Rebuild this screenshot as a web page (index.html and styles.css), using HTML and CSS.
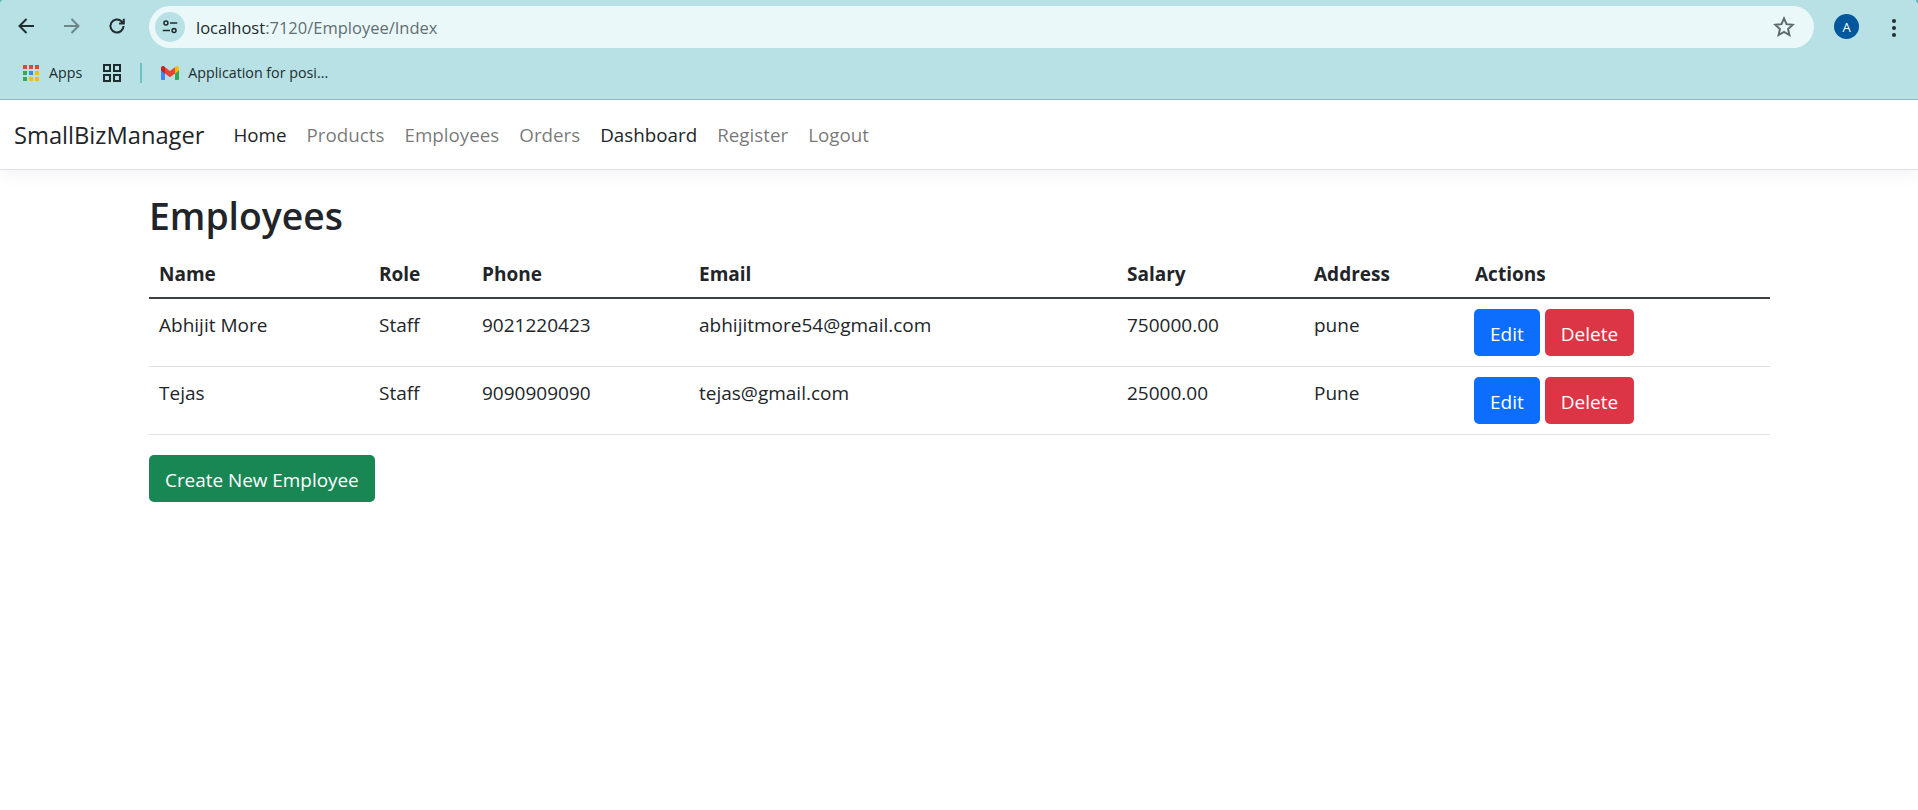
FILE: index.html
```html
<!DOCTYPE html>
<html lang="en">
<head>
  <meta charset="UTF-8">
  <title>Employees - SmallBizManager</title>
  <link rel="stylesheet" href="styles.css">
</head>
<body>
  <div class="browser">
    <div class="toolbar">
      <svg class="tool-icon back" viewBox="0 0 20 20"><path d="M17 10H3.500M9.500 3 2.500 10l7 7" /></svg>
      <svg class="tool-icon forward" viewBox="0 0 20 20"><path d="M3 10h13.500M10.500 3l7 7-7 7" /></svg>
      <svg class="tool-icon reload" viewBox="0 0 20 20"><path d="M16.500 10a6.500 6.500 0 1 1-2-4.700L16.500 7.200M16.800 2.800v4.700h-4.700" /></svg>
      <div class="omnibox">
        <span class="site-info">
          <svg viewBox="0 0 20 20"><circle cx="5.500" cy="5.500" r="2.200" /><path d="M10 5.500h8M2 14h8" /><circle cx="14.500" cy="14" r="2.200" /></svg>
        </span>
        <span class="url">localhost<span class="url-dim">:7120/Employee/Index</span></span>
        <svg class="star" viewBox="0 0 20 20"><path d="M10 2.200l2.300 5.200 5.600.6-4.200 3.800 1.200 5.500L10 14.500l-4.900 2.800 1.200-5.500L2.100 8l5.600-.6z" /></svg>
      </div>
      <span class="avatar">A</span>
      <span class="menu-dots"><i></i><i></i><i></i></span>
    </div>
    <div class="bookmarks">
      <svg class="apps-icon" viewBox="0 0 16 16">
        <rect x="0" y="0" width="4" height="4" fill="#ea4335" /><rect x="6" y="0" width="4" height="4" fill="#ea4335" /><rect x="12" y="0" width="4" height="4" fill="#ea4335" />
        <rect x="0" y="6" width="4" height="4" fill="#34a853" /><rect x="6" y="6" width="4" height="4" fill="#4285f4" /><rect x="12" y="6" width="4" height="4" fill="#fbbc05" />
        <rect x="0" y="12" width="4" height="4" fill="#34a853" /><rect x="6" y="12" width="4" height="4" fill="#fbbc05" /><rect x="12" y="12" width="4" height="4" fill="#fbbc05" />
      </svg>
      <span class="bm-apps">Apps</span>
      <svg class="groups-icon" viewBox="0 0 18 18"><rect x="1" y="1" width="6" height="6" /><rect x="11" y="1" width="6" height="6" /><rect x="1" y="11" width="6" height="6" /><rect x="11" y="11" width="6" height="6" /></svg>
      <span class="bm-sep"></span>
      <svg class="gmail-icon" viewBox="0 0 18 14">
        <path d="M0 2.500V12.700C0 13.400.5 14 1.200 14H4V5.500z" fill="#4285f4" />
        <path d="M14 5.500V14h2.800c.7 0 1.200-.6 1.200-1.300V2.500z" fill="#34a853" />
        <path d="M4 7.500 0 4.500V2C0 .3 2 -.5 3.200.5L4 1.200z" fill="#c5221f" />
        <path d="M4 7.500V1.200L9 5l5-3.800v6.300L9 11.200z" fill="#ea4335" />
        <path d="M14 7.500l4-3V2c0-1.700-2-2.500-3.200-1.500l-.8.700z" fill="#fbbc05" />
      </svg>
      <span class="bm-title">Application for posi...</span>
    </div>
  </div>

  <nav class="navbar">
    <a class="brand" href="#">SmallBizManager</a>
    <a class="nav-link active" href="#">Home</a>
    <a class="nav-link" href="#">Products</a>
    <a class="nav-link" href="#">Employees</a>
    <a class="nav-link" href="#">Orders</a>
    <a class="nav-link active" href="#">Dashboard</a>
    <a class="nav-link" href="#">Register</a>
    <a class="nav-link" href="#">Logout</a>
  </nav>

  <main class="container">
    <h1>Employees</h1>
    <table class="table">
      <colgroup>
        <col class="col-name"><col class="col-role"><col class="col-phone"><col class="col-email"><col class="col-salary"><col class="col-address"><col class="col-actions">
      </colgroup>
      <thead>
        <tr>
          <th>Name</th>
          <th>Role</th>
          <th>Phone</th>
          <th>Email</th>
          <th>Salary</th>
          <th>Address</th>
          <th>Actions</th>
        </tr>
      </thead>
      <tbody>
        <tr>
          <td>Abhijit More</td>
          <td>Staff</td>
          <td>9021220423</td>
          <td>abhijitmore54@gmail.com</td>
          <td>750000.00</td>
          <td>pune</td>
          <td class="actions"><a class="btn btn-edit" href="#">Edit</a><a class="btn btn-delete" href="#">Delete</a></td>
        </tr>
        <tr>
          <td>Tejas</td>
          <td>Staff</td>
          <td>9090909090</td>
          <td>tejas@gmail.com</td>
          <td>25000.00</td>
          <td>Pune</td>
          <td class="actions"><a class="btn btn-edit" href="#">Edit</a><a class="btn btn-delete" href="#">Delete</a></td>
        </tr>
      </tbody>
    </table>
    <a class="btn btn-create" href="#">Create New Employee</a>
  </main>
</body>
</html>
```

FILE: styles.css
```css
* { box-sizing: border-box; }
body { margin: 0; background: #fff; color: #212529; font-family: "Open Sans", "Noto Sans", sans-serif; font-size: 19px; }
a { text-decoration: none; }

/* browser chrome */
.browser { position: relative; height: 100px; background: #b8e1e5; border-bottom: 1px solid #8fb7bd; font-family: "Open Sans", sans-serif; }
.browser::before { content: ""; position: absolute; top: 0; left: 0; width: 3px; height: 3px; background: linear-gradient(135deg, #5fbcc4 50%, transparent 50%); }
.browser::after { content: ""; position: absolute; top: 0; right: 0; width: 3px; height: 3px; background: linear-gradient(225deg, #5fbcc4 50%, transparent 50%); }
.toolbar { height: 54px; padding: 6px 0 6px 17px; display: flex; align-items: flex-start; }
.tool-icon { width: 20px; height: 20px; margin-top: 10px; fill: none; stroke: #202c2e; stroke-width: 2; }
.forward { margin-left: 24px; stroke: #6e8488; }
.reload { margin-left: 26px; }
.omnibox { width: 1665px; height: 42px; margin-left: 22px; background: #ebf8f9; border-radius: 21px; display: flex; align-items: center; padding-left: 6px; }
.site-info { width: 30px; height: 30px; border-radius: 50%; background: #b8e1e5; display: flex; align-items: center; justify-content: center; }
.site-info svg { width: 18px; height: 18px; fill: none; stroke: #202c2e; stroke-width: 1.700; }
.url { margin-left: 11px; font-size: 16.500px; color: #202c2e; }
.url-dim { color: #5f6f72; }
.star { width: 22px; height: 22px; margin-left: auto; margin-right: 19px; fill: none; stroke: #5f6a6d; stroke-width: 1.800; }
.avatar { width: 25px; height: 25px; margin: 8px 0 0 20px; border-radius: 50%; background: #00579c; color: #fff; font-size: 13px; display: flex; align-items: center; justify-content: center; }
.menu-dots { margin: 13px 0 0 33px; display: flex; flex-direction: column; gap: 3px; }
.menu-dots i { width: 4px; height: 4px; border-radius: 50%; background: #202c2e; }

.bookmarks { height: 37px; padding: 0 0 0 23px; display: flex; align-items: center; font-size: 14.250px; color: #202c2e; }
.apps-icon { width: 16px; height: 16px; }
.bm-apps { margin-left: 10px; }
.groups-icon { width: 18px; height: 18px; margin-left: 21px; fill: none; stroke: #202c2e; stroke-width: 2; }
.bm-sep { width: 2px; height: 20px; margin-left: 19px; background: #6fc0c8; }
.gmail-icon { width: 18px; height: 14px; margin-left: 19px; }
.bm-title { margin-left: 9px; }

/* navbar */
.navbar { height: 70px; padding: 0 10px 0 14px; display: flex; align-items: center; background: #fff; border-bottom: 1px solid #dee2e6; box-shadow: 0 5px 15px rgba(0,0,0,.05); }
.brand { color: #212529; font-size: 23.700px; margin-right: 19px; }
.nav-link { color: rgba(0,0,0,.55); padding: 0 10px; font-size: 18.800px; }
.nav-link.active { color: #212529; }

/* page */
.container { width: 1621px; margin-left: 149px; padding-top: 20px; }
h1 { margin: 0 0 6px; font-size: 37.300px; line-height: 52px; font-weight: 600; }
.table { width: 1621px; table-layout: fixed; border-collapse: collapse; margin-bottom: 20px; }
.col-name { width: 220px; }
.col-role { width: 103px; }
.col-phone { width: 217px; }
.col-email { width: 428px; }
.col-salary { width: 187px; }
.col-address { width: 161px; }
.col-actions { width: 305px; }
th, td { text-align: left; vertical-align: top; }
th { padding: 12px 10px 8px; line-height: 29px; font-weight: 700; border-bottom: 2px solid #3c4044; }
td { padding: 10px; line-height: 33px; border-bottom: 1px solid #dee2e6; }
td.actions { padding-left: 9px; }
.btn { display: inline-block; height: 47px; line-height: 50px; padding: 0 16px; border-radius: 5px; color: #fff; font-size: 19px; }
.btn-edit { background: #0d6efd; margin-right: 5px; }
.btn-delete { background: #dc3545; }
.btn-create { background: #198754; font-size: 18.900px; }
```
